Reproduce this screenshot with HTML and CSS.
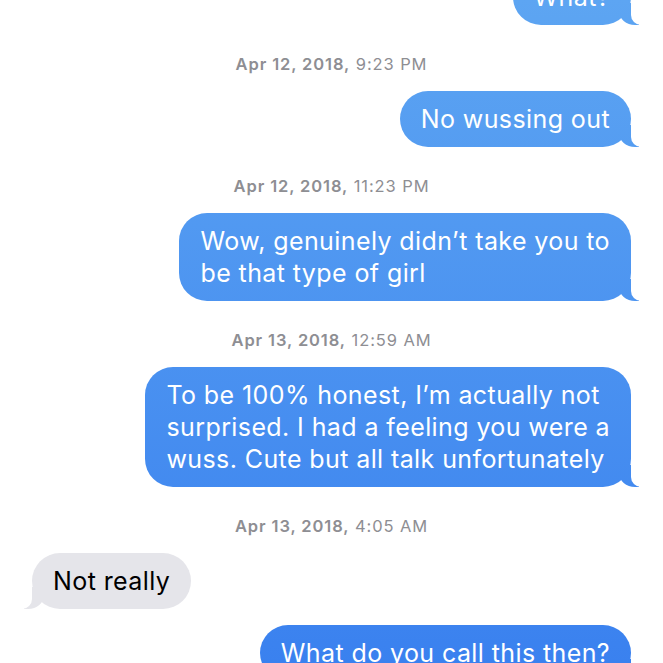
FILE: index.html
```html
<!DOCTYPE html>
<html lang="en">
<head>
<meta charset="utf-8">
<title>Messages</title>
<link rel="stylesheet" href="styles.css">
</head>
<body>
<div class="thread">
  <div class="msg sent">What?</div>
  <div class="stamp"><b>Apr 12, 2018,</b> 9:23 PM</div>
  <div class="msg sent">No wussing out</div>
  <div class="stamp"><b>Apr 12, 2018,</b> 11:23 PM</div>
  <div class="msg sent">Wow, genuinely didn’t take you to<br>be that type of girl</div>
  <div class="stamp"><b>Apr 13, 2018,</b> 12:59 AM</div>
  <div class="msg sent">To be 100% honest, I’m actually not<br>surprised. I had a feeling you were a<br>wuss. Cute but all talk unfortunately</div>
  <div class="stamp"><b>Apr 13, 2018,</b> 4:05 AM</div>
  <div class="msg received">Not really</div>
  <div class="msg sent">What do you call this then?</div>
</div>
</body>
</html>
```
FILE: styles.css
```css
html, body {
  margin: 0;
  padding: 0;
  background: #ffffff;
  overflow: hidden;
}

body {
  font-family: Inter, "Liberation Sans", sans-serif;
  -webkit-font-smoothing: antialiased;
}

.thread {
  display: flex;
  flex-direction: column;
  align-items: flex-end;
  padding: 0 32px;
  margin-top: -31px;
}

.msg {
  position: relative;
  font-size: 25px;
  line-height: 32px;
  letter-spacing: 0.4px;
  padding: 12px 21px 12px 21px;
  border-radius: 28px;
  white-space: nowrap;
}

.sent {
  color: #ffffff;
  background: linear-gradient(#5da5f2, #3a81ef) fixed;
}

.sent::before {
  content: "";
  position: absolute;
  bottom: 0;
  right: -8px;
  width: 20px;
  height: 22px;
  background: linear-gradient(#5da5f2, #3a81ef) fixed;
  border-bottom-left-radius: 16px 14px;
}

.sent::after {
  content: "";
  position: absolute;
  bottom: 0;
  right: -10px;
  width: 10px;
  height: 22px;
  background: #ffffff;
  border-bottom-left-radius: 10px;
}

.received {
  align-self: flex-start;
  color: #000000;
  background: #e5e5ea;
}

.received::before {
  content: "";
  position: absolute;
  bottom: 0;
  left: -8px;
  width: 20px;
  height: 22px;
  background: #e5e5ea;
  border-bottom-right-radius: 16px 14px;
}

.received::after {
  content: "";
  position: absolute;
  bottom: 0;
  left: -10px;
  width: 10px;
  height: 22px;
  background: #ffffff;
  border-bottom-right-radius: 10px;
}

.received + .sent {
  margin-top: 16px;
}

.stamp {
  align-self: center;
  font-size: 16.5px;
  letter-spacing: 0.9px;
  line-height: 18px;
  padding: 30px 0 18px;
  color: #8e8e93;
}

.stamp b {
  font-weight: 600;
}
```
